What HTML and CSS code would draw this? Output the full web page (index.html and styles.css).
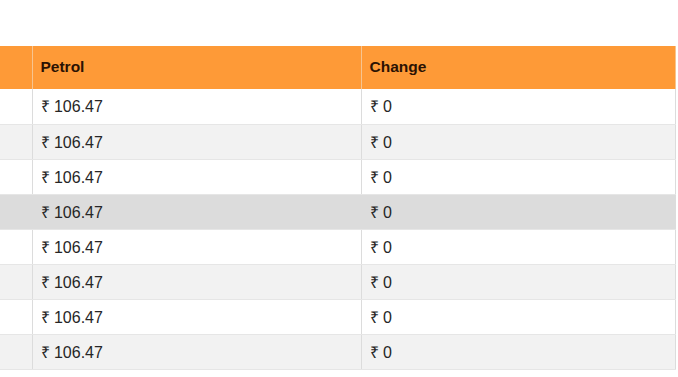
FILE: index.html
```html
<!DOCTYPE html>
<html>
<head>
<meta charset="utf-8">
<link rel="stylesheet" href="styles.css">
</head>
<body>
<div class="wrap">
<table class="prices">
  <thead>
    <tr><th class="c1"></th><th class="c2">Petrol</th><th class="c3">Change</th></tr>
  </thead>
  <tbody>
    <tr><td></td><td>₹ 106.47</td><td>₹ 0</td></tr>
    <tr><td></td><td>₹ 106.47</td><td>₹ 0</td></tr>
    <tr><td></td><td>₹ 106.47</td><td>₹ 0</td></tr>
    <tr class="hover"><td></td><td>₹ 106.47</td><td>₹ 0</td></tr>
    <tr><td></td><td>₹ 106.47</td><td>₹ 0</td></tr>
    <tr><td></td><td>₹ 106.47</td><td>₹ 0</td></tr>
    <tr><td></td><td>₹ 106.47</td><td>₹ 0</td></tr>
    <tr><td></td><td>₹ 106.47</td><td>₹ 0</td></tr>
  </tbody>
</table>
</div>
</body>
</html>
```

FILE: styles.css
```css
html, body {
  margin: 0;
  padding: 0;
  background: #fff;
}
.wrap {
  padding-top: 46px;
  width: 676px;
}
.prices {
  width: 676px;
  border-collapse: collapse;
  table-layout: fixed;
  font-family: "Liberation Sans", Arial, sans-serif;
  font-size: 16px;
  color: #262626;
}
.prices th {
  background: #fe9a37;
  color: #2b1203;
  font-weight: bold;
  font-size: 15.5px;
  text-align: left;
  height: 43px;
  padding: 0 8px;
  border-left: 1px solid #f7c48f;
  border-right: 1px solid #f7c48f;
  box-sizing: border-box;
  vertical-align: middle;
}
.prices .c1 { width: 32px; border-left: none; }
.prices .c2 { width: 329px; }
.prices th.c2, .prices th.c3 { padding-top: 0; padding-bottom: 2px; }
.prices td {
  height: 35px;
  padding: 0 8px;
  border-left: 1px solid #e2e2e2;
  border-right: 1px solid #dcdcdc;
  border-bottom: 1px solid #e6e6e6;
  box-sizing: border-box;
}
.prices td:first-child { border-left: none; }
.prices tbody tr:nth-child(even) { background: #f2f2f2; }
.prices tbody tr.hover { background: #dcdcdc; }
```
